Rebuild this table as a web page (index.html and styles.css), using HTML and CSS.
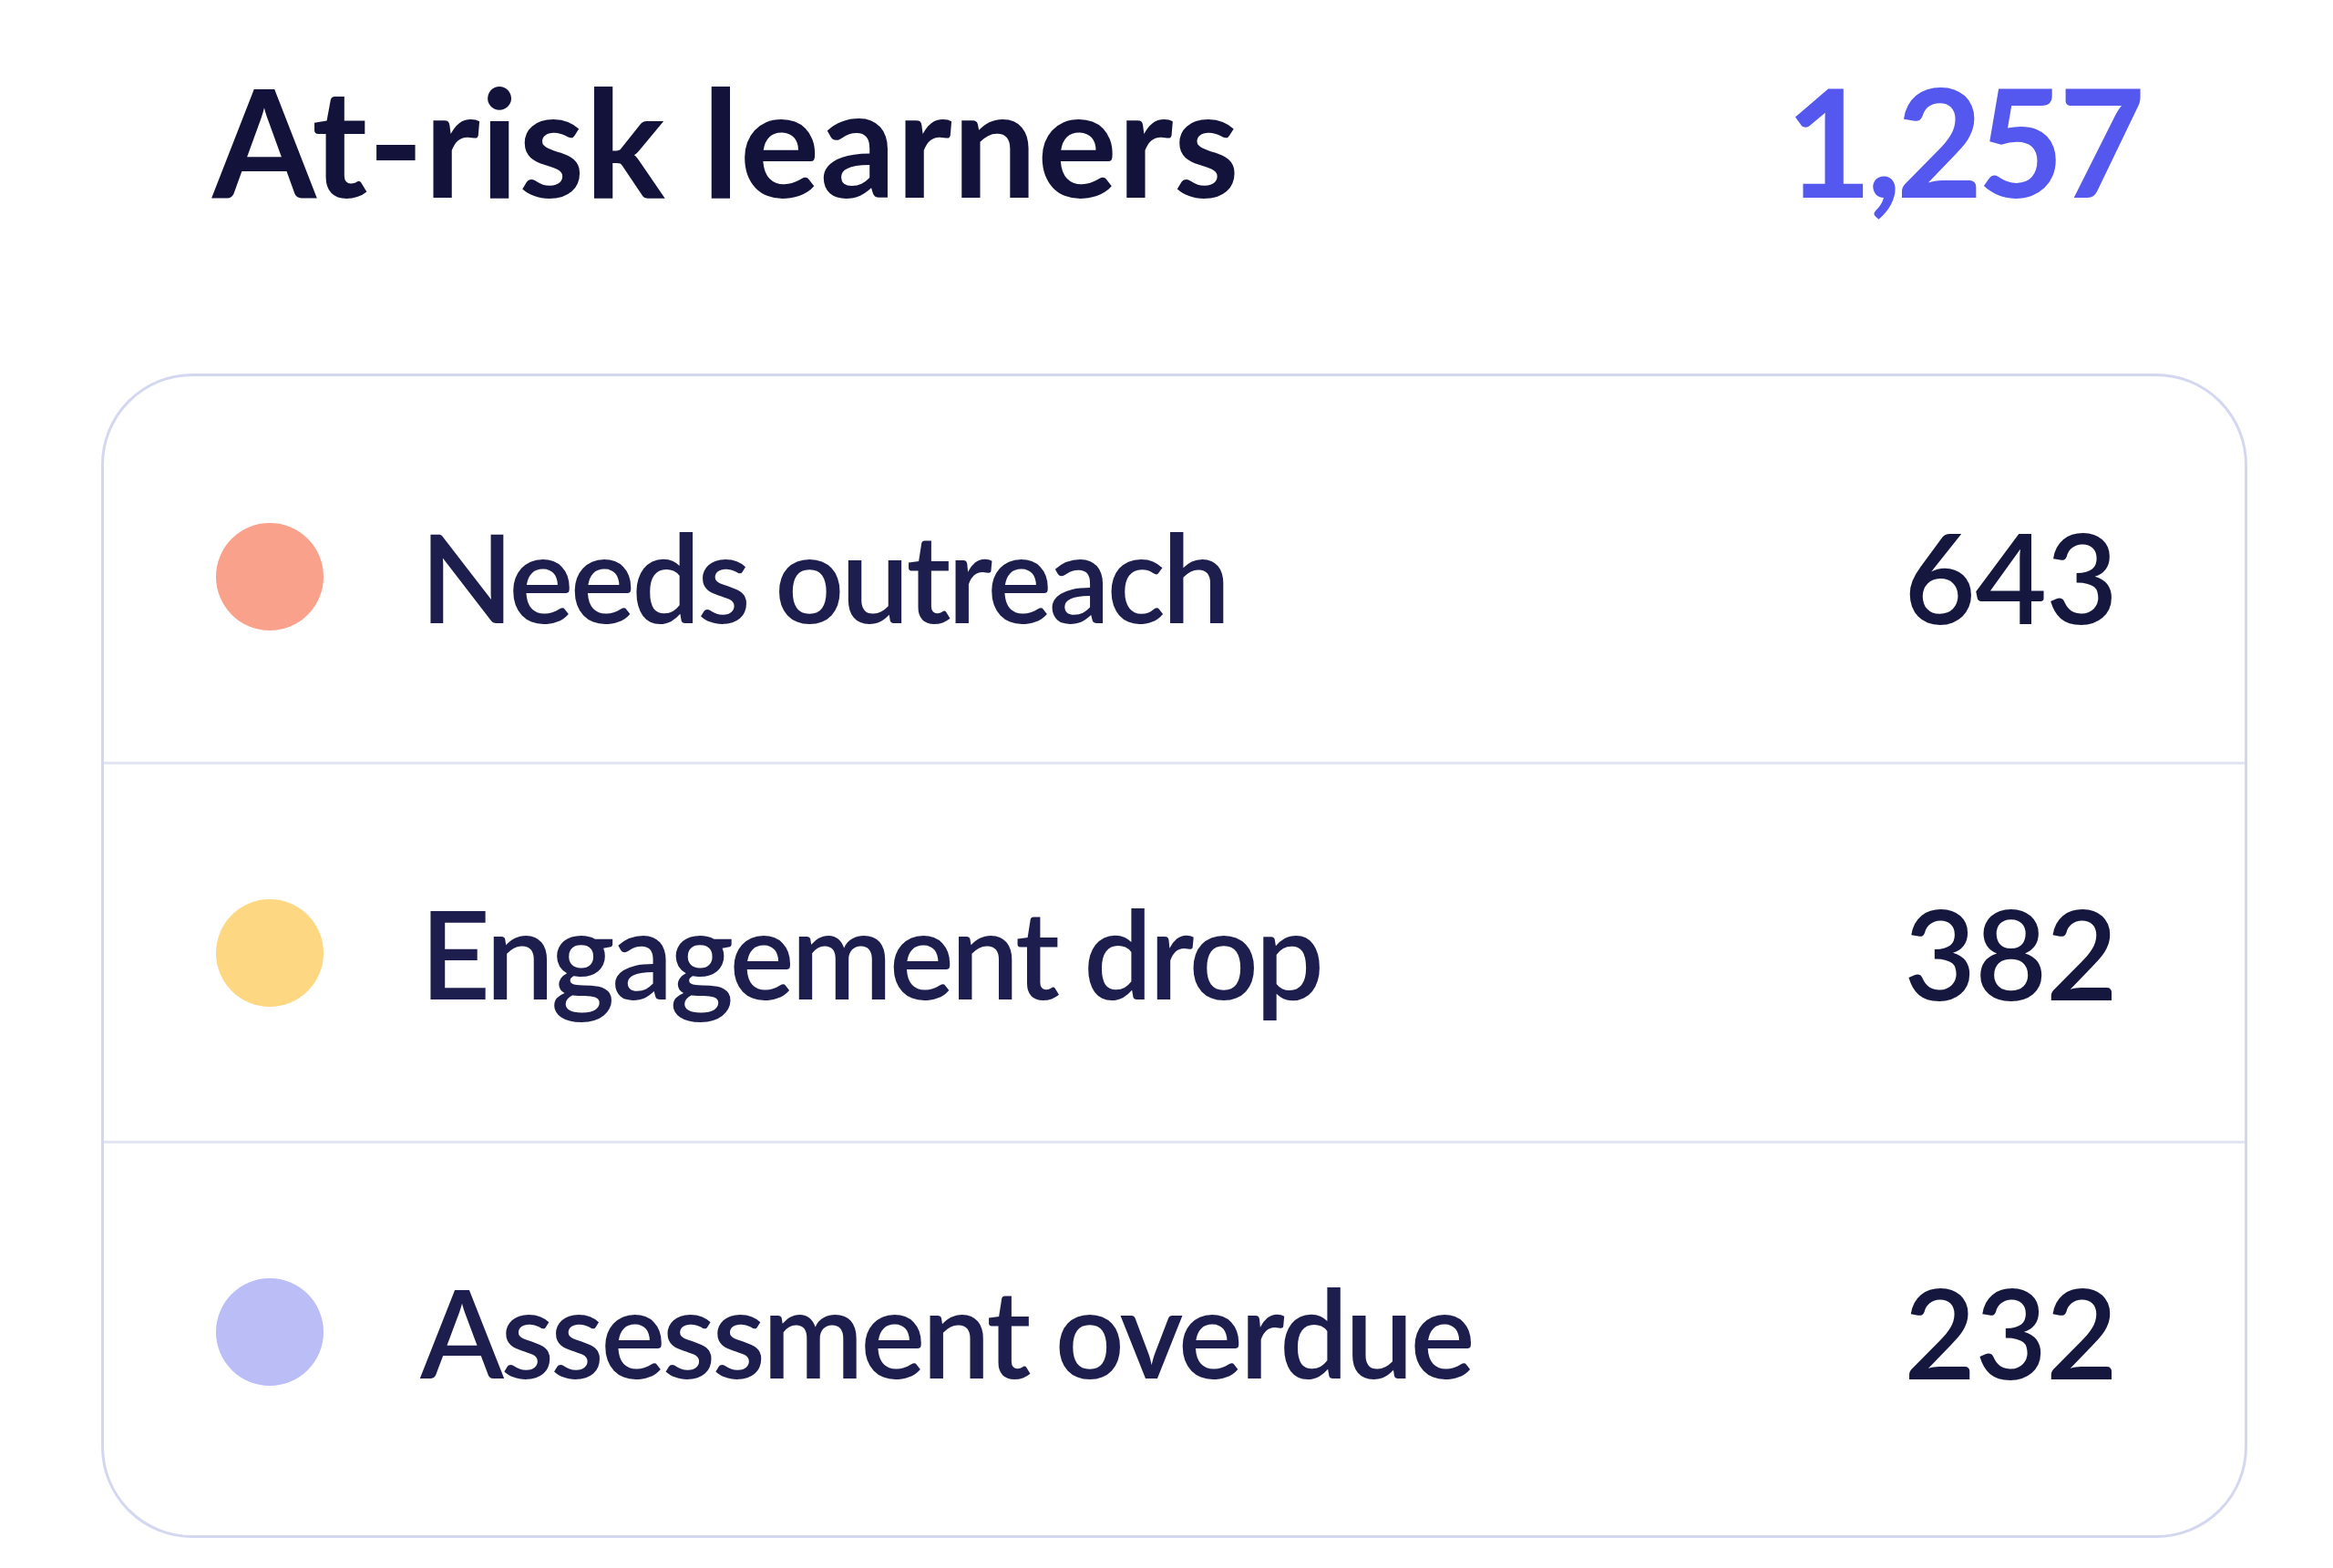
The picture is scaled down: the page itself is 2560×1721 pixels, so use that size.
FILE: index.html
```html
<!DOCTYPE html>
<html lang="en">
<head>
<meta charset="utf-8">
<title>At-risk learners</title>
<link rel="stylesheet" href="styles.css">
</head>
<body>
<main class="panel">
  <header class="panel-header">
    <h1 class="panel-title">At-risk learners</h1>
    <span class="panel-total">1,257</span>
  </header>
  <ul class="risk-list">
    <li class="risk-row">
      <span class="dot dot-outreach"></span>
      <span class="risk-label">Needs outreach</span>
      <span class="risk-count">643</span>
    </li>
    <li class="risk-row">
      <span class="dot dot-engagement"></span>
      <span class="risk-label">Engagement drop</span>
      <span class="risk-count">382</span>
    </li>
    <li class="risk-row">
      <span class="dot dot-assessment"></span>
      <span class="risk-label">Assessment overdue</span>
      <span class="risk-count">232</span>
    </li>
  </ul>
</main>
</body>
</html>
```

FILE: styles.css
```css
* {
  box-sizing: border-box;
}

html, body {
  margin: 0;
  padding: 0;
  background: #ffffff;
}

body {
  font-family: Lato, "Noto Sans", "Liberation Sans", sans-serif;
  color: #1d1e4e;
}

.panel {
  width: 2560px;
  padding: 72px 94px 0 111px;
}

.panel-header {
  display: flex;
  align-items: baseline;
  justify-content: space-between;
  padding: 0 118px 0 122px;
  margin-bottom: 174px;
}

.panel-title {
  margin: 0;
  font-size: 164px;
  line-height: 1;
  font-weight: 700;
  color: #12123a;
  letter-spacing: 0.5px;
}

.panel-total {
  font-size: 164px;
  line-height: 1;
  font-weight: 700;
  color: #5558ee;
  letter-spacing: -6px;
}

.risk-list {
  list-style: none;
  margin: 0;
  padding: 7px 0 17px;
  border: 3px solid #d4d7f0;
  border-radius: 100px;
  overflow: hidden;
}

.risk-row {
  display: flex;
  align-items: center;
  height: 416px;
  padding: 0 140px 0 123px;
}

.risk-row:first-child {
  padding-top: 10px;
}

.risk-row + .risk-row {
  border-top: 3px solid #e2e5f5;
}

.dot {
  flex: none;
  width: 118px;
  height: 118px;
  border-radius: 50%;
  margin-right: 106px;
}

.dot-outreach {
  background: #f9a18b;
}

.dot-engagement {
  background: #fdd782;
}

.dot-assessment {
  background: #bbbdf7;
}

.risk-label {
  flex: 1;
  font-size: 134px;
  line-height: 1;
  font-weight: 600;
  letter-spacing: -3.6px;
  color: #1d1e4e;
}

.risk-count {
  font-size: 136px;
  line-height: 1;
  font-weight: 600;
  letter-spacing: -1px;
  color: #16173f;
}
```
